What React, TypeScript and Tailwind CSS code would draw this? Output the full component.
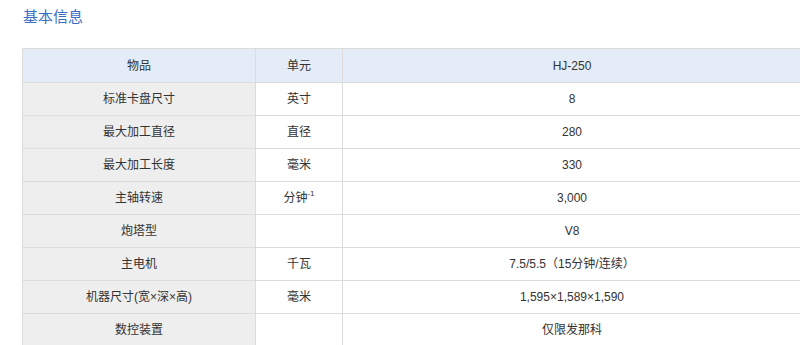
const rows: { item: string; unit: React.ReactNode; value: string }[] = [
  { item: "标准卡盘尺寸", unit: "英寸", value: "8" },
  { item: "最大加工直径", unit: "直径", value: "280" },
  { item: "最大加工长度", unit: "毫米", value: "330" },
  {
    item: "主轴转速",
    unit: (
      <>
        分钟<sup className="text-[8px] -top-[0.8em]">-1</sup>
      </>
    ),
    value: "3,000",
  },
  { item: "炮塔型", unit: "", value: "V8" },
  { item: "主电机", unit: "千瓦", value: "7.5/5.5（15分钟/连续）" },
  { item: "机器尺寸(宽×深×高)", unit: "毫米", value: "1,595×1,589×1,590" },
  { item: "数控装置", unit: "", value: "仅限发那科" },
];

export default function App() {
  return (
    <div
      className="h-[345px] w-[800px] overflow-hidden bg-white text-[12px] text-[#333]"
      style={{ fontFamily: '"Liberation Sans", "Noto Sans CJK SC", sans-serif' }}
    >
      <h2 className="pl-[23px] pt-[7px] text-[15px] leading-[20px] text-[#3b6fc4]">
        基本信息
      </h2>

      <div className="mt-[21px] ml-[22px] w-[780px]">
        <table className="w-full table-fixed border-collapse">
          <colgroup>
            <col className="w-[233px]" />
            <col className="w-[87px]" />
            <col />
          </colgroup>
          <thead>
            <tr className="h-[34px] bg-[#e3ecf7]">
              <th className="border border-[#dcdcdc] font-normal">物品</th>
              <th className="border border-[#dcdcdc] font-normal">单元</th>
              <th className="border border-[#dcdcdc] font-normal">HJ-250</th>
            </tr>
          </thead>
          <tbody>
            {rows.map((r) => (
              <tr key={r.item} className="h-[33px]">
                <td className="border border-[#dcdcdc] bg-[#eeeeee] text-center">
                  {r.item}
                </td>
                <td className="border border-[#dcdcdc] bg-white text-center">
                  {r.unit}
                </td>
                <td className="border border-[#dcdcdc] bg-white text-center">
                  {r.value}
                </td>
              </tr>
            ))}
          </tbody>
        </table>
      </div>
    </div>
  );
}
